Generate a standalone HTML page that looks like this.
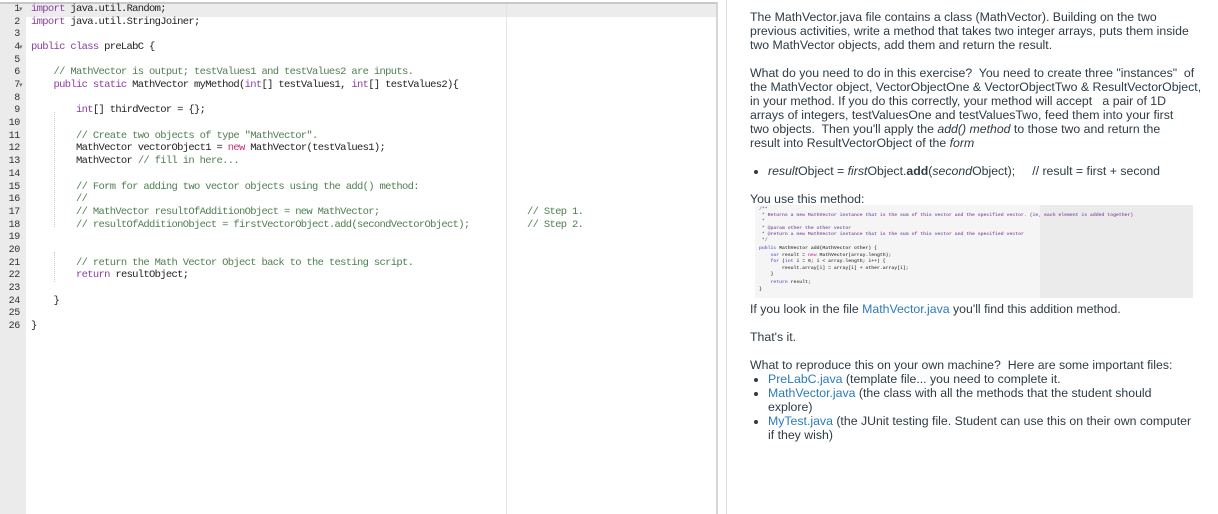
<!DOCTYPE html>
<html><head><meta charset="utf-8"><style>
body{margin:0;width:1218px;height:514px;background:#fff;overflow:hidden;position:relative;font-family:"Liberation Sans",sans-serif}
#ed{position:absolute;left:0;top:2px;width:718px;height:512px;border-top:2px solid #c8c8c8;border-right:2px solid #d6d6d6;box-sizing:border-box}
#gut{position:absolute;left:0;top:0;width:26px;height:100%;background:#ebebeb}
#act{position:absolute;left:26px;top:0;width:690px;height:12.7px;background:#ececec}
#pm{position:absolute;left:506px;top:0;width:1px;height:100%;background:#e4e4e4}
.ln{position:absolute;left:0;width:20px;text-align:right;font:10px "Liberation Mono",monospace;color:#333;letter-spacing:-0.3px}
.cl{position:absolute;left:31px;white-space:pre;font:10.5px "Liberation Mono",monospace;letter-spacing:-0.68px;color:#222}
.k{color:#8b3fa0}.c{color:#4f7f4f}.n{color:#c0307a}
.fd{position:absolute;font-size:7px;color:#777;left:19px}
.ig{position:absolute;width:0;border-left:1px dotted #ccc}
#rp{position:absolute;left:726px;top:0;width:492px;height:514px;border-left:1px solid #ddd}
#tx{position:absolute;left:750px;top:10px;width:468px;font-size:12.3px;line-height:14px;color:#2d3b45;white-space:nowrap}
#tx p{margin:0 0 14px}
#tx ul{margin:0 0 14px;padding-left:18px}
a{color:#2b7abc;text-decoration:none}
#img{position:absolute;left:755px;top:205px;width:438px;height:93px;background:#f5f5f5}
#img .r{position:absolute;left:285px;top:0;width:153px;height:93px;background:#ebebeb}
#img div.t{position:absolute;left:4px;white-space:pre;font:bold 4.8px "Liberation Mono",monospace;color:#555}
</style></head><body>
<div id="ed">
<div id="gut"></div><div id="act"></div><div id="pm"></div>
<div class="ig" style="left:54px;top:108px;height:115px"></div>
<div class="ig" style="left:54px;top:248px;height:30px"></div>
</div>
<div id="code"></div>
<script>
var L=[
'<span class="k">import</span> java.util.Random;',
'<span class="k">import</span> java.util.StringJoiner;',
'',
'<span class="k">public class</span> preLabC {',
'',
'    <span class="c">// MathVector is output; testValues1 and testValues2 are inputs.</span>',
'    <span class="k">public static</span> MathVector myMethod(<span class="k">int</span>[] testValues1, <span class="k">int</span>[] testValues2){',
'',
'        <span class="k">int</span>[] thirdVector = {};',
'',
'        <span class="c">// Create two objects of type "MathVector".</span>',
'        MathVector vectorObject1 = <span class="n">new</span> MathVector(testValues1);',
'        MathVector <span class="c">// fill in here...</span>',
'',
'        <span class="c">// Form for adding two vector objects using the add() method:</span>',
'        <span class="c">//</span>',
'        <span class="c">// MathVector resultOfAdditionObject = new MathVector;</span>',
'        <span class="c">// resultOfAdditionObject = firstVectorObject.add(secondVectorObject);</span>',
'','',
'        <span class="c">// return the Math Vector Object back to the testing script.</span>',
'        <span class="k">return</span> resultObject;',
'',
'    }',
'',
'}'];
var h='';
for(var i=0;i<26;i++){var t=(1+i*12.68)+4;
h+='<div class="ln" style="top:'+(t-1)+'px">'+(i+1)+'</div>';
if(i==0||i==3||i==6)h+='<div class="fd" style="top:'+(t)+'px">▾</div>';
h+='<div class="cl" style="top:'+(t-2)+'px">'+L[i]+'</div>';
if(i==16||i==17)h+='<div class="cl" style="left:527px;top:'+(t-2)+'px"><span class="c">// Step '+(i-15)+'.</span></div>';}
document.getElementById('code').innerHTML=h;
</script>
<div id="rp"></div>
<div id="tx">
<p>The MathVector.java file contains a class (MathVector). Building on the two<br>previous activities, write a method that takes two integer arrays, puts them inside<br>two MathVector objects, add them and return the result.</p>
<p>What do you need to do in this exercise?&nbsp; You need to create three "instances"&nbsp; of<br>the MathVector object, VectorObjectOne &amp; VectorObjectTwo &amp; ResultVectorObject,<br>in your method. If you do this correctly, your method will accept &nbsp; a pair of 1D<br>arrays of integers, testValuesOne and testValuesTwo, feed them into your first<br>two objects.&nbsp; Then you'll apply the <i>add() method</i> to those two and return the<br>result into ResultVectorObject of the <i>form</i></p>
<ul><li><i>result</i>Object = <i>first</i>Object.<b>add</b>(<i>second</i>Object);&nbsp;&nbsp;&nbsp;&nbsp; // result = first + second</li></ul>
<p style="margin-bottom:96px">You use this method:</p>
<p>If you look in the file <a>MathVector.java</a> you'll find this addition method.</p>
<p>That's it.</p>
<p style="margin:0">What to reproduce this on your own machine?&nbsp; Here are some important files:</p>
<ul style="margin:0"><li><a>PreLabC.java</a> (template file... you need to complete it.</li>
<li><a>MathVector.java</a> (the class with all the methods that the student should<br>explore)</li>
<li><a>MyTest.java</a> (the JUnit testing file. Student can use this on their own computer<br>if they wish)</li></ul>
</div>
<div id="img"><div class="r"></div>
<div class="t" style="top:2px;color:#86a">/**</div>
<div class="t" style="top:8px;color:#86a"> * Returns a new MathVector instance that is the sum of this vector and the specified vector. (ie, each element is added together)</div>
<div class="t" style="top:14px;color:#86a"> *</div>
<div class="t" style="top:21px;color:#86a"> * @param other the other vector</div>
<div class="t" style="top:27px;color:#86a"> * @return a new MathVector instance that is the sum of this vector and the specified vector</div>
<div class="t" style="top:33px;color:#86a"> */</div>
<div class="t" style="top:41px"><span style="color:#77c">public</span> MathVector add(MathVector other) {</div>
<div class="t" style="top:48px">    <span style="color:#77c">var</span> result = <span style="color:#c5a">new</span> MathVector(array.length);</div>
<div class="t" style="top:54px">    <span style="color:#77c">for</span> (<span style="color:#77c">int</span> i = 0; i &lt; array.length; i++) {</div>
<div class="t" style="top:61px">        result.array[i] = array[i] + other.array[i];</div>
<div class="t" style="top:67px">    }</div>
<div class="t" style="top:75px">    <span style="color:#77c">return</span> result;</div>
<div class="t" style="top:82px">}</div>
</div>
</body></html>
